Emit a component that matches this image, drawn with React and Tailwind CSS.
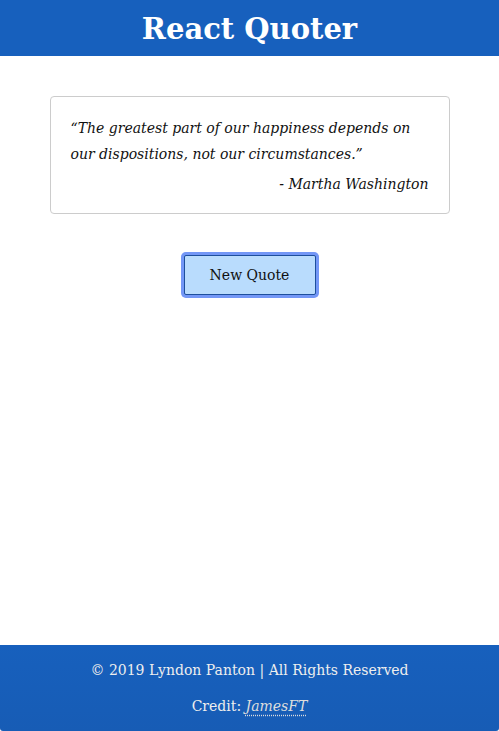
import React, { useState } from 'react';

const quotes = [
  {
    text: '“The greatest part of our happiness depends on our dispositions, not our circumstances.”',
    author: 'Martha Washington',
  },
];

const serif = { fontFamily: '"DejaVu Serif", Georgia, serif' };

const App = () => {
  const [idx, setIdx] = useState(0);
  const quote = quotes[idx];

  return (
    <div className="flex min-h-[731px] flex-col bg-white text-[#111]" style={serif}>
      <header className="flex h-14 items-center justify-center bg-[#1760bd]">
        <h1 className="pt-[2px] text-[29px] font-bold leading-none text-white">React Quoter</h1>
      </header>

      <main className="flex flex-1 flex-col items-center pt-10">
        <div className="w-[400px] rounded border border-[#ccc] px-5 pt-[18px] pb-[16px]">
          <p className="text-[14px] italic leading-[26px]">{quote.text}</p>
          <p className="mt-[4px] text-right text-[14px] italic leading-[26px]">- {quote.author}</p>
        </div>

        <button
          onClick={() => setIdx((idx + 1) % quotes.length)}
          className="mt-[41px] h-[40px] w-[132px] rounded-[2px] border border-[#1d4f9c] bg-[#b9dcfd] text-[14px] text-[#111] outline-none ring-[3px] ring-[#7397f6]"
        >
          New Quote
        </button>
      </main>

      <footer className="flex h-[86px] flex-col items-center justify-center gap-[12px] rounded-b-[3px] bg-gradient-to-b from-[#1760bd] to-[#175cb5] text-[14px] text-[#eee]">
        <p className="leading-6">© 2019 Lyndon Panton | All Rights Reserved</p>
        <p className="leading-6">
          Credit:{' '}
          <a href="#" className="italic text-[#ddd] underline decoration-dotted underline-offset-4">
            JamesFT
          </a>
        </p>
      </footer>
    </div>
  );
};

export default App;
